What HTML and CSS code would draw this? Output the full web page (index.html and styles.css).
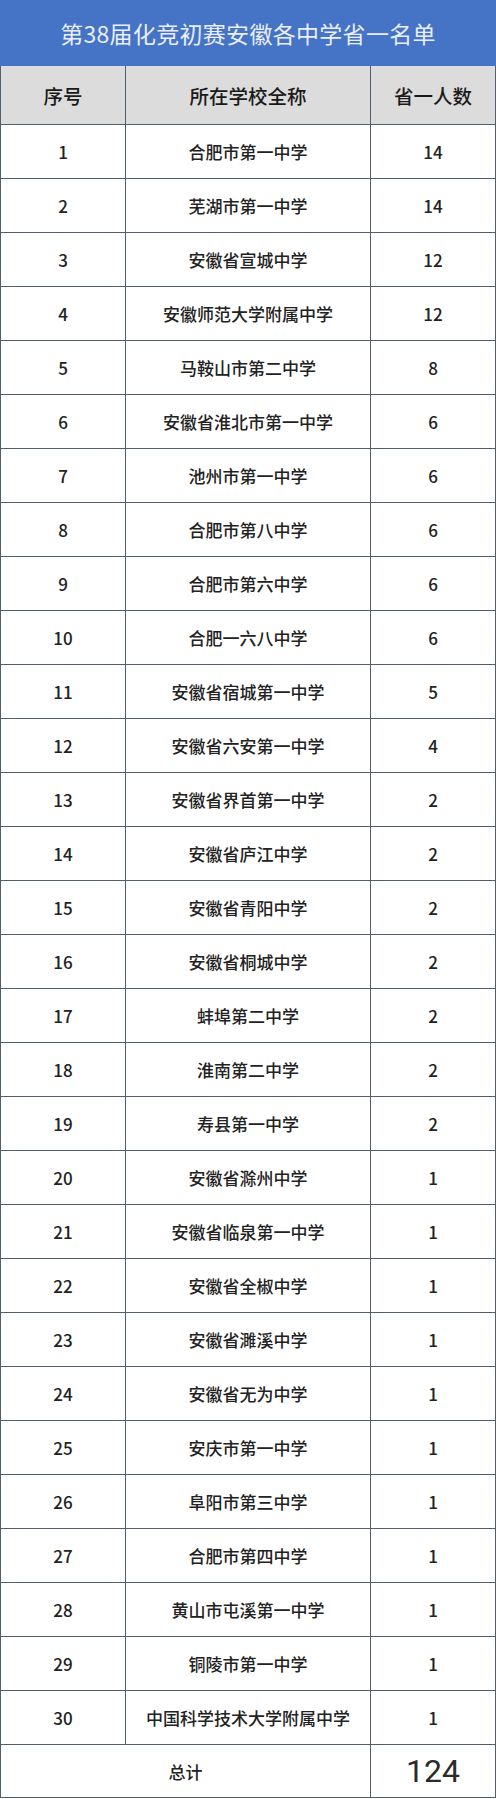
FILE: index.html
```html
<!DOCTYPE html>
<html lang="zh-CN">
<head>
<meta charset="utf-8">
<title>第38届化竞初赛安徽各中学省一名单</title>
<link rel="stylesheet" href="styles.css">
</head>
<body>
<div class="sheet">
  <div class="title">第38届化竞初赛安徽各中学省一名单</div>
  <table class="list">
    <colgroup><col class="c1"><col class="c2"><col class="c3"></colgroup>
    <thead>
      <tr><th>序号</th><th>所在学校全称</th><th>省一人数</th></tr>
    </thead>
    <tbody>
      <tr><td>1</td><td>合肥市第一中学</td><td>14</td></tr>
      <tr><td>2</td><td>芜湖市第一中学</td><td>14</td></tr>
      <tr><td>3</td><td>安徽省宣城中学</td><td>12</td></tr>
      <tr><td>4</td><td>安徽师范大学附属中学</td><td>12</td></tr>
      <tr><td>5</td><td>马鞍山市第二中学</td><td>8</td></tr>
      <tr><td>6</td><td>安徽省淮北市第一中学</td><td>6</td></tr>
      <tr><td>7</td><td>池州市第一中学</td><td>6</td></tr>
      <tr><td>8</td><td>合肥市第八中学</td><td>6</td></tr>
      <tr><td>9</td><td>合肥市第六中学</td><td>6</td></tr>
      <tr><td>10</td><td>合肥一六八中学</td><td>6</td></tr>
      <tr><td>11</td><td>安徽省宿城第一中学</td><td>5</td></tr>
      <tr><td>12</td><td>安徽省六安第一中学</td><td>4</td></tr>
      <tr><td>13</td><td>安徽省界首第一中学</td><td>2</td></tr>
      <tr><td>14</td><td>安徽省庐江中学</td><td>2</td></tr>
      <tr><td>15</td><td>安徽省青阳中学</td><td>2</td></tr>
      <tr><td>16</td><td>安徽省桐城中学</td><td>2</td></tr>
      <tr><td>17</td><td>蚌埠第二中学</td><td>2</td></tr>
      <tr><td>18</td><td>淮南第二中学</td><td>2</td></tr>
      <tr><td>19</td><td>寿县第一中学</td><td>2</td></tr>
      <tr><td>20</td><td>安徽省滁州中学</td><td>1</td></tr>
      <tr><td>21</td><td>安徽省临泉第一中学</td><td>1</td></tr>
      <tr><td>22</td><td>安徽省全椒中学</td><td>1</td></tr>
      <tr><td>23</td><td>安徽省濉溪中学</td><td>1</td></tr>
      <tr><td>24</td><td>安徽省无为中学</td><td>1</td></tr>
      <tr><td>25</td><td>安庆市第一中学</td><td>1</td></tr>
      <tr><td>26</td><td>阜阳市第三中学</td><td>1</td></tr>
      <tr><td>27</td><td>合肥市第四中学</td><td>1</td></tr>
      <tr><td>28</td><td>黄山市屯溪第一中学</td><td>1</td></tr>
      <tr><td>29</td><td>铜陵市第一中学</td><td>1</td></tr>
      <tr><td>30</td><td>中国科学技术大学附属中学</td><td>1</td></tr>
    </tbody>
    <tfoot>
      <tr><td colspan="2" class="total-label">总计</td><td class="total-num">124</td></tr>
    </tfoot>
  </table>
</div>
</body>
</html>
```

FILE: styles.css
```css
html, body {
  margin: 0;
  padding: 0;
  background: #ffffff;
}
body {
  font-family: "Noto Sans CJK SC", "Noto Sans", sans-serif;
  color: #222222;
}
.sheet {
  width: 496px;
}
.title {
  height: 66px;
  background: #4573c5;
  color: #e9eef8;
  font-size: 23px;
  line-height: 66px;
  text-align: center;
  letter-spacing: 0.3px;
}
.list {
  width: 495px;
  border-collapse: collapse;
  table-layout: fixed;
}
.c1 { width: 125px; }
.c2 { width: 245px; }
.c3 { width: 125px; }
.list th,
.list td {
  border: 1px solid #525e69;
  padding: 0;
  text-align: center;
  vertical-align: middle;
}
.list th {
  height: 58px;
  background: #dcdcdc;
  font-size: 19.5px;
  font-weight: 500;
  color: #1a1a1a;
  border-top: none;
}
.list td {
  height: 53px;
  font-size: 17px;
  font-weight: 500;
  color: #222222;
}
.list tfoot td {
  height: 52px;
}
.total-label {
  font-size: 17px;
}
.list td.total-num {
  font-family: "Roboto", "Liberation Sans", sans-serif;
  font-size: 32px;
  font-weight: 400;
  color: #2a2a2a;
}
```
